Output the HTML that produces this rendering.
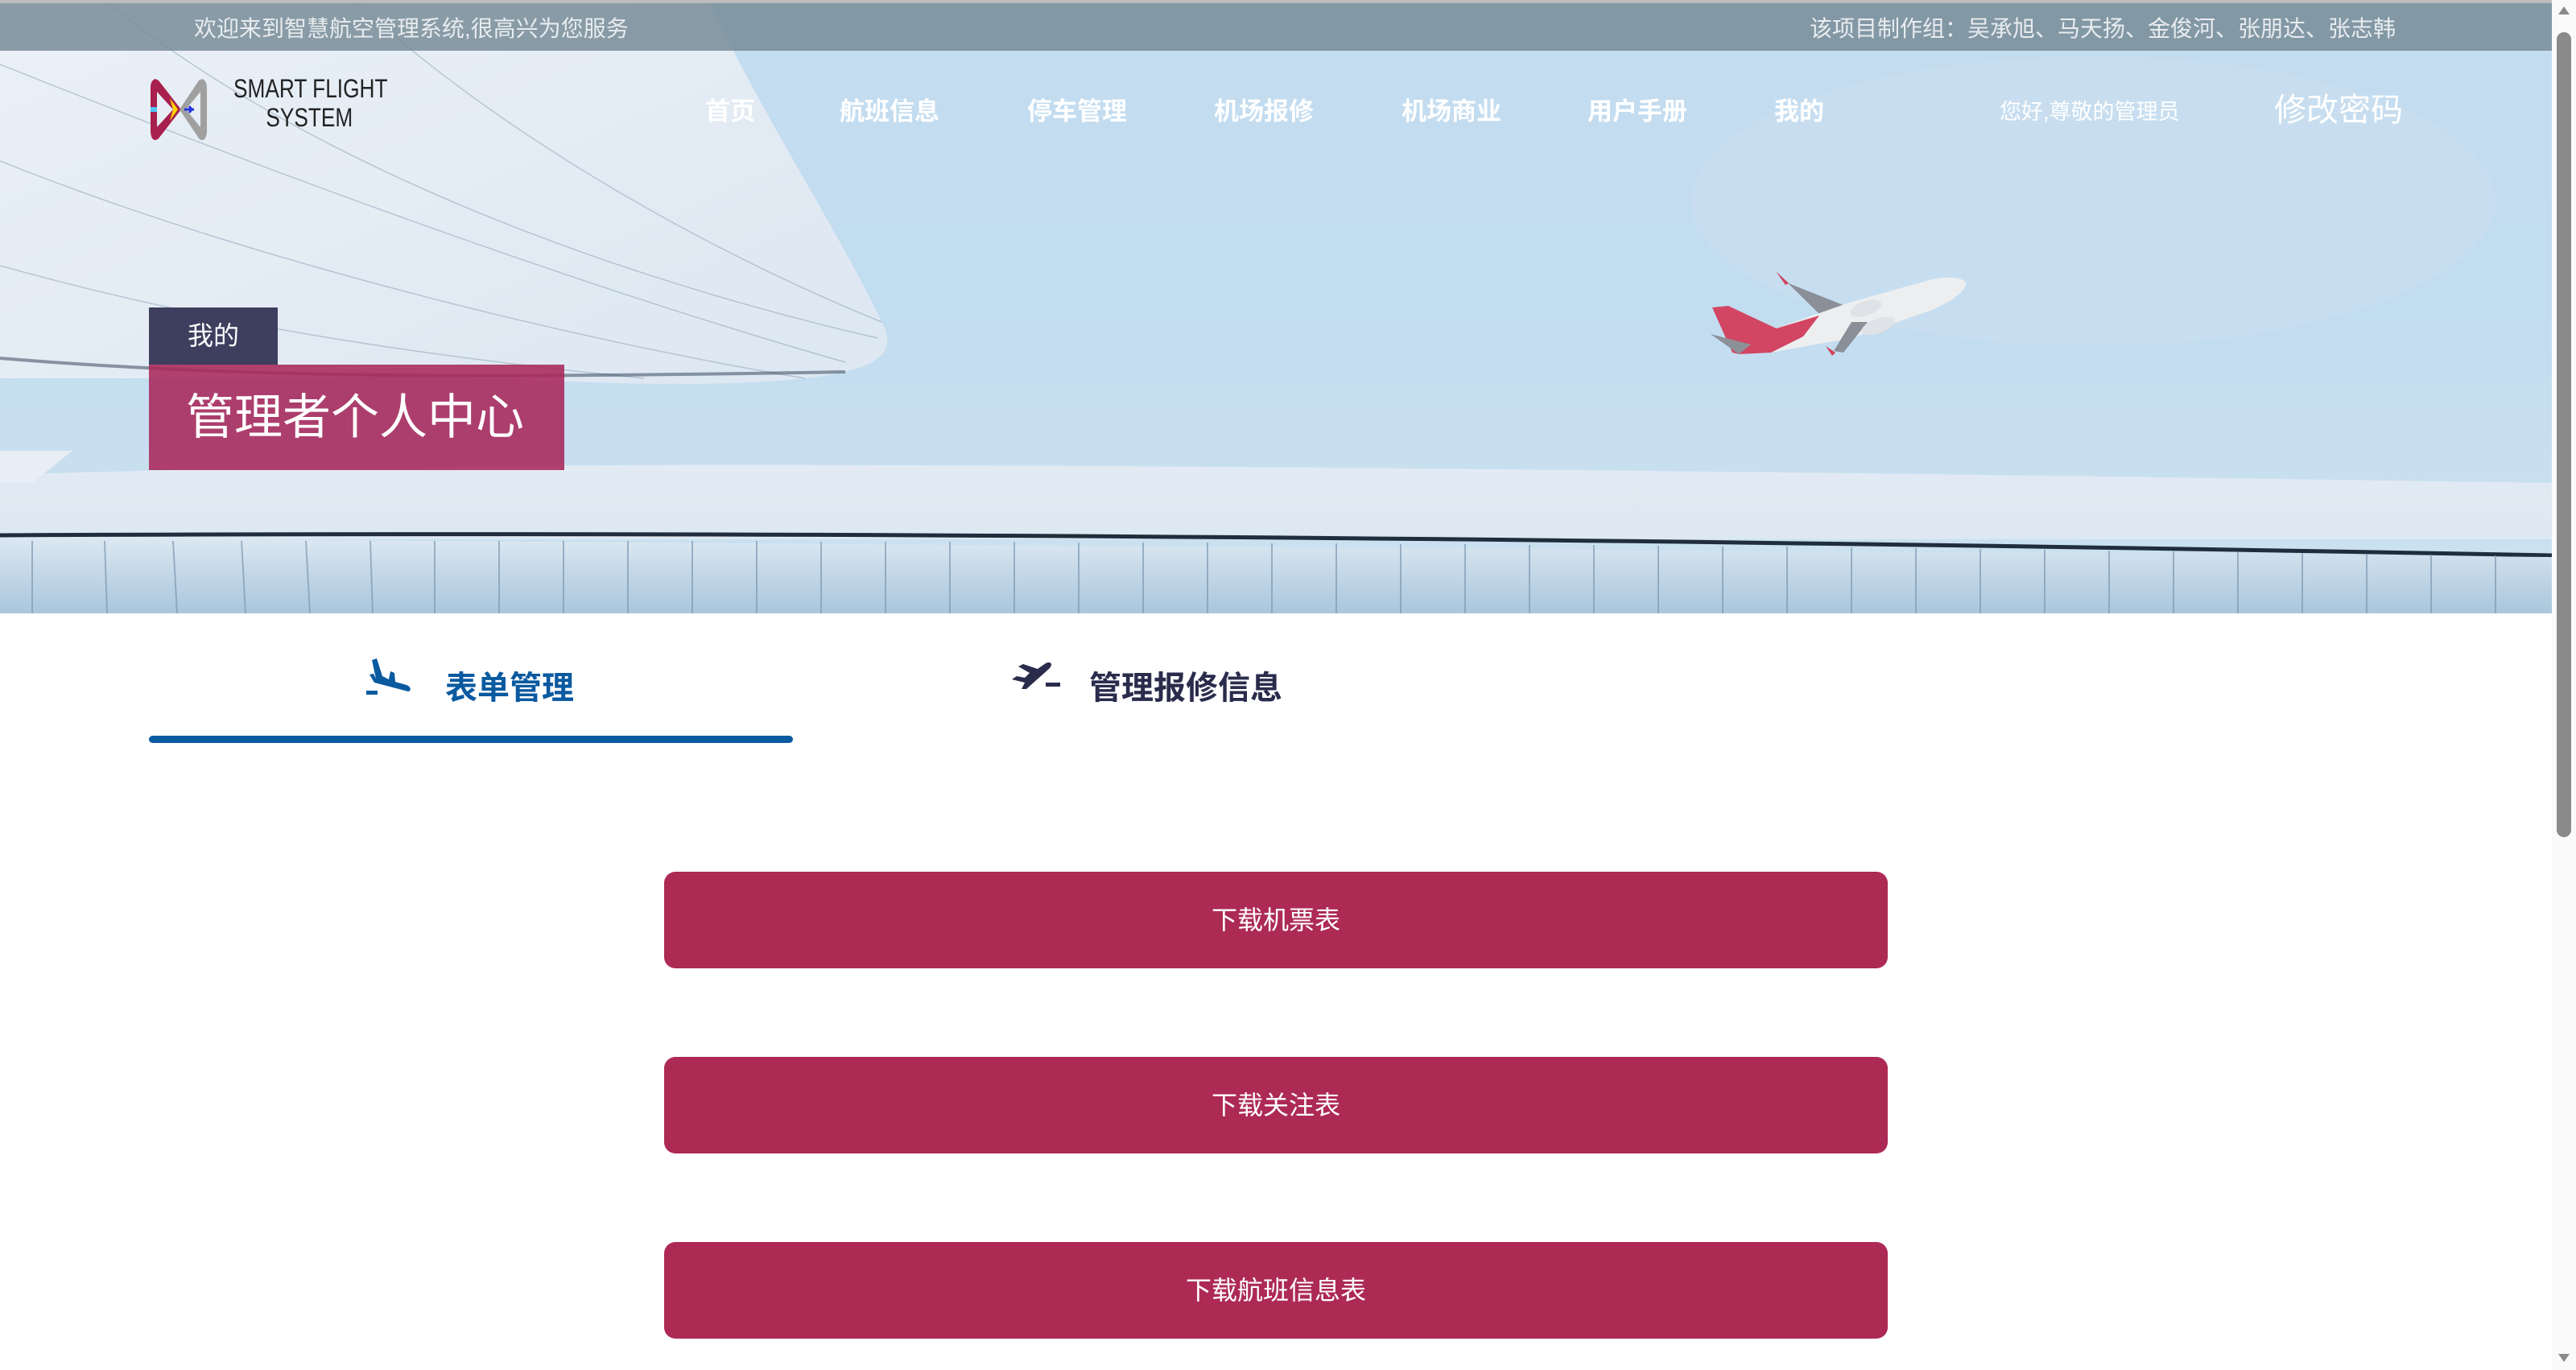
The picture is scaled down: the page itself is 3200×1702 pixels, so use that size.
<!DOCTYPE html>
<html><head><meta charset="utf-8">
<style>
*{margin:0;padding:0;box-sizing:border-box}
body{width:3200px;height:1702px;overflow:hidden;background:#fff;font-family:"Liberation Sans","Noto Sans CJK SC",sans-serif;position:relative}
.abs{position:absolute}
#hero{left:0;top:0;width:3170px;height:762px;overflow:hidden}
.topbar{left:0;top:4px;width:3170px;height:59px;background:rgba(120,140,152,0.85)}
.tb{color:#e8ecef;font-size:28px;top:14px;white-space:nowrap}
.nav{color:#fff;font-size:31px;font-weight:bold;top:113px;white-space:nowrap}
.btn{left:825px;width:1520px;height:120px;background:#ad2a55;border-radius:14px;color:#fff;font-size:32px;text-align:center;line-height:120px}
</style></head><body>
<div id="hero" class="abs">
<svg width="3170" height="762" viewBox="0 0 3170 762" style="position:absolute;left:0;top:0">
<defs>
<linearGradient id="sky" x1="0" y1="0" x2="0" y2="1"><stop offset="0" stop-color="#c4dcef"/><stop offset="0.5" stop-color="#c2dcf0"/><stop offset="1" stop-color="#cde2f0"/></linearGradient>
<linearGradient id="roof" x1="0" y1="0" x2="1" y2="1"><stop offset="0" stop-color="#eaf0f6"/><stop offset="1" stop-color="#dde7f2"/></linearGradient>
<linearGradient id="base" x1="0" y1="0" x2="0" y2="1"><stop offset="0" stop-color="#e2ebf4"/><stop offset="1" stop-color="#dde8f2"/></linearGradient>
<linearGradient id="wall" x1="0" y1="0" x2="0" y2="1"><stop offset="0" stop-color="#dce8f2"/><stop offset="1" stop-color="#a9c6dc"/></linearGradient>
</defs>
<rect width="3170" height="762" fill="url(#sky)"/>
<ellipse cx="2600" cy="250" rx="500" ry="180" fill="#d2e2f2" opacity="0.35"/>
<path d="M0 0 L880 0 C950 150 1050 300 1100 410 C1110 440 1090 460 1000 470 C800 490 600 460 400 470 L0 470 Z" fill="url(#roof)"/>
<g stroke="#8aa0b5" stroke-width="1.5" fill="none" opacity="0.5">
<path d="M130 0 C350 180 700 330 1090 420"/>
<path d="M440 0 C600 150 850 300 1095 400"/>
<path d="M0 80 C300 200 700 350 1050 450"/>
<path d="M0 200 C300 320 700 420 1000 470"/>
<path d="M0 330 C250 400 500 440 800 470"/>
</g>
<path d="M0 445 C300 470 600 470 1050 462" stroke="#2a3a4e" stroke-width="4" fill="none" opacity="0.5"/>
<path d="M0 590 C600 570 1500 575 3170 600 L3170 670 L0 670 Z" fill="url(#base)"/>
<path d="M0 560 L90 560 L40 600 L0 600Z" fill="#e8eef5"/>
<path d="M0 665 C1000 660 2000 668 3170 690" stroke="#1f2d3c" stroke-width="5" fill="none"/>
<path d="M0 668 L3170 692 L3170 762 L0 762Z" fill="url(#wall)"/>
<g stroke="#7f9ab2" stroke-width="2" opacity="0.7">
<line x1="40" y1="672" x2="40" y2="762"/><line x1="130" y1="672" x2="133" y2="762"/><line x1="215" y1="672" x2="220" y2="762"/><line x1="300" y1="672" x2="305" y2="762"/><line x1="380" y1="672" x2="385" y2="762"/><line x1="460" y1="672" x2="463" y2="762"/><line x1="540" y1="672" x2="540" y2="762"/><line x1="620" y1="672" x2="620" y2="762"/><line x1="700" y1="672" x2="700" y2="762"/><line x1="780" y1="672" x2="780" y2="762"/><line x1="860" y1="672" x2="860" y2="762"/><line x1="940" y1="672" x2="940" y2="762"/><line x1="1020" y1="673" x2="1020" y2="762"/><line x1="1100" y1="673" x2="1100" y2="762"/><line x1="1180" y1="673" x2="1180" y2="762"/><line x1="1260" y1="673" x2="1260" y2="762"/><line x1="1340" y1="674" x2="1340" y2="762"/><line x1="1420" y1="674" x2="1420" y2="762"/><line x1="1500" y1="674" x2="1500" y2="762"/><line x1="1580" y1="675" x2="1580" y2="762"/><line x1="1660" y1="675" x2="1660" y2="762"/><line x1="1740" y1="676" x2="1740" y2="762"/><line x1="1820" y1="676" x2="1820" y2="762"/><line x1="1900" y1="677" x2="1900" y2="762"/><line x1="1980" y1="677" x2="1980" y2="762"/><line x1="2060" y1="678" x2="2060" y2="762"/><line x1="2140" y1="679" x2="2140" y2="762"/><line x1="2220" y1="679" x2="2220" y2="762"/><line x1="2300" y1="680" x2="2300" y2="762"/><line x1="2380" y1="681" x2="2380" y2="762"/><line x1="2460" y1="682" x2="2460" y2="762"/><line x1="2540" y1="683" x2="2540" y2="762"/><line x1="2620" y1="684" x2="2620" y2="762"/><line x1="2700" y1="685" x2="2700" y2="762"/><line x1="2780" y1="686" x2="2780" y2="762"/><line x1="2860" y1="687" x2="2860" y2="762"/><line x1="2940" y1="688" x2="2940" y2="762"/><line x1="3020" y1="689" x2="3020" y2="762"/><line x1="3100" y1="690" x2="3100" y2="762"/>
</g>
<!-- plane -->
<path d="M2206 337 L2222 352 L2305 385 L2300 400 L2262 392 Z" fill="#8a8f98"/>
<path d="M2206 337 L2222 352 L2218 354 Z" fill="#d0415e"/>
<path d="M2442 352 C2440 344 2420 343 2400 347 L2300 375 L2200 410 L2160 422 L2152 438 L2200 438 L2300 420 L2400 385 C2430 372 2442 360 2442 352Z" fill="#eceef0"/>
<path d="M2127 382 L2147 380 L2215 412 L2180 430 L2160 440 L2152 438 Z" fill="#d24563"/>
<path d="M2200 410 L2260 392 L2240 418 L2200 438 L2160 440Z" fill="#d24563"/>
<path d="M2125 415 L2175 428 L2160 440 Z" fill="#8c9197"/>
<path d="M2300 400 L2320 400 L2290 438 L2278 436Z" fill="#8a8f98"/>
<path d="M2268 430 L2280 438 L2276 442Z" fill="#d0415e"/>
<ellipse cx="2333" cy="405" rx="22" ry="9" fill="#dfe2e6" transform="rotate(-20 2333 405)"/>
<ellipse cx="2318" cy="383" rx="20" ry="9" fill="#dfe2e6" transform="rotate(-20 2318 383)"/>
</svg>
<div class="abs topbar"></div>
<div class="abs" style="left:0;top:0;width:3170px;height:4px;background:#bdbdbd"></div>
<div class="abs tb" style="left:241px">欢迎来到智慧航空管理系统,很高兴为您服务</div>
<div class="abs tb" style="left:2248px">该项目制作组：吴承旭、马天扬、金俊河、张朋达、张志韩</div>
<!-- logo -->
<svg class="abs" style="left:185px;top:92px" width="75" height="90" viewBox="0 0 75 90">
<path d="M8 6 C2 8 2 14 2 20 L2 70 C2 80 6 85 12 80 L40 44 L12 8 Z M10 22 L30 44 L10 66 Z" fill="#a8204e" fill-rule="evenodd"/>
<path d="M66 6 C72 8 72 14 72 20 L72 70 C72 80 68 85 62 80 L38 44 L62 8 Z M64 22 L46 44 L64 66 Z" fill="#a0a0a0" fill-rule="evenodd"/>
<path d="M26 30 L36 44 L26 58 L30 44 Z" fill="#ffd600"/>
<rect x="2" y="41" width="8" height="6" fill="#4fc3f7"/>
<path d="M44 44 L56 44 M50 40 L53 44 L50 48" stroke="#2233dd" stroke-width="3" fill="none"/>
</svg>
<div class="abs" style="left:290px;top:92px;width:230px;text-align:center;color:#222;font-size:32px;line-height:36px;white-space:nowrap;transform:scaleX(0.82);transform-origin:left">SMART FLIGHT<br>SYSTEM</div>
<div class="abs nav" style="left:876px">首页</div>
<div class="abs nav" style="left:1043px">航班信息</div>
<div class="abs nav" style="left:1276px">停车管理</div>
<div class="abs nav" style="left:1508px">机场报修</div>
<div class="abs nav" style="left:1741px">机场商业</div>
<div class="abs nav" style="left:1972px">用户手册</div>
<div class="abs nav" style="left:2204px">我的</div>
<div class="abs" style="left:2484px;top:117px;color:#fff;font-size:27px;white-space:nowrap">您好,尊敬的管理员</div>
<div class="abs" style="left:2825px;top:104px;color:#fff;font-size:40px;white-space:nowrap">修改密码</div>
<div class="abs" style="left:185px;top:382px;width:160px;height:71px;background:#3e3f5f;color:#fff;font-size:32px;line-height:71px;text-align:center">我的</div>
<div class="abs" style="left:185px;top:453px;width:516px;height:131px;background:rgba(168,40,90,0.88);color:#fff;font-size:60px;line-height:131px;padding-left:46px;white-space:nowrap">管理者个人中心</div>
</div>
<!-- scrollbar -->
<div class="abs" style="left:3170px;top:0;width:30px;height:1702px;background:#fafafa"></div>
<div class="abs" style="left:3176px;top:40px;width:18px;height:1000px;background:#8a8a8a;border-radius:9px"></div>
<div class="abs" style="left:3178px;top:8px;width:0;height:0;border-left:7px solid transparent;border-right:7px solid transparent;border-bottom:10px solid #8a8a8a"></div>
<div class="abs" style="left:3178px;top:1682px;width:0;height:0;border-left:7px solid transparent;border-right:7px solid transparent;border-top:10px solid #8a8a8a"></div>
<!-- tabs -->
<svg class="abs" style="left:455px;top:818px" width="65" height="48" viewBox="0 0 65 48">
<path d="M7 2 L13 0 L20 22 L28 26 L30 16 L35 18 L36 29 L50 33 C56 35 56 41 52 41 L10 30 L4 20 L9 19 L12 25 Z" fill="#0a5aa0"/>
<rect x="0" y="40" width="14" height="5" fill="#0a5aa0"/>
</svg>
<div class="abs" style="left:553px;top:822px;color:#0a5aa0;font-size:40px;font-weight:bold;white-space:nowrap">表单管理</div>
<div class="abs" style="left:185px;top:914px;width:800px;height:9px;background:#0a5aa0;border-radius:5px"></div>
<svg class="abs" style="left:1255px;top:822px" width="65" height="40" viewBox="0 0 65 40">
<path d="M2 22 L8 18 L18 20 L24 14 L10 6 L16 3 L34 9 L44 2 C50 -1 54 3 48 9 L20 34 L14 34 L18 26 Z" fill="#2a2c4c"/>
<rect x="44" y="26" width="18" height="5" fill="#2a2c4c"/>
</svg>
<div class="abs" style="left:1353px;top:822px;color:#2a2c4c;font-size:40px;font-weight:bold;white-space:nowrap">管理报修信息</div>
<div class="abs btn" style="top:1083px">下载机票表</div>
<div class="abs btn" style="top:1313px">下载关注表</div>
<div class="abs btn" style="top:1543px">下载航班信息表</div>
</body></html>
